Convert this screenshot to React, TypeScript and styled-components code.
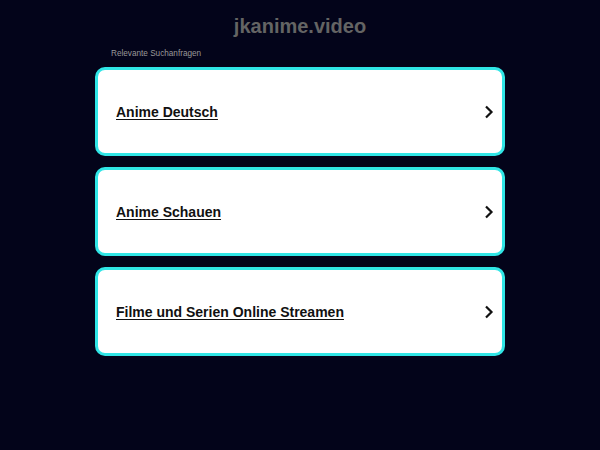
import React from 'react';
import styled, { createGlobalStyle } from 'styled-components';

const GlobalStyle = createGlobalStyle`
  html, body {
    margin: 0;
    padding: 0;
    background: #03041a;
    font-family: "Liberation Sans", Arial, sans-serif;
  }
`;

const Page = styled.div`
  width: 600px;
  min-height: 450px;
  background: #03041a;
  display: flex;
  flex-direction: column;
  align-items: center;
`;

const Domain = styled.h1`
  margin: 15px 0 0;
  font-size: 20px;
  line-height: 23px;
  font-weight: bold;
  color: #646464;
`;

const Section = styled.div`
  width: 410px;
  margin-top: 10px;
`;

const Caption = styled.div`
  padding-left: 16px;
  font-size: 8.2px;
  line-height: 11px;
  color: #999999;
  margin-bottom: 8px;
`;

const List = styled.div`
  display: flex;
  flex-direction: column;
  gap: 11px;
`;

const Card = styled.a`
  box-sizing: border-box;
  height: 89px;
  background: #ffffff;
  border: 3px solid #30e6e6;
  border-radius: 10px;
  display: flex;
  align-items: center;
  justify-content: space-between;
  padding: 0 6px 0 18px;
  text-decoration: none;
  cursor: pointer;
`;

const Label = styled.span`
  font-size: 14px;
  font-weight: bold;
  color: #111;
  text-decoration: underline;
  text-underline-offset: 2px;
`;

const Chevron = () => (
  <svg width="14" height="14" viewBox="0 0 14 14">
    <path d="M4 1.5 L9.5 7 L4 12.5" fill="none" stroke="#111" strokeWidth="2.2" />
  </svg>
);

const items = ['Anime Deutsch', 'Anime Schauen', 'Filme und Serien Online Streamen'];

export default function App() {
  return (
    <Page>
      <GlobalStyle />
      <Domain>jkanime.video</Domain>
      <Section>
        <Caption>Relevante Suchanfragen</Caption>
        <List>
          {items.map((t) => (
            <Card key={t}>
              <Label>{t}</Label>
              <Chevron />
            </Card>
          ))}
        </List>
      </Section>
    </Page>
  );
}
